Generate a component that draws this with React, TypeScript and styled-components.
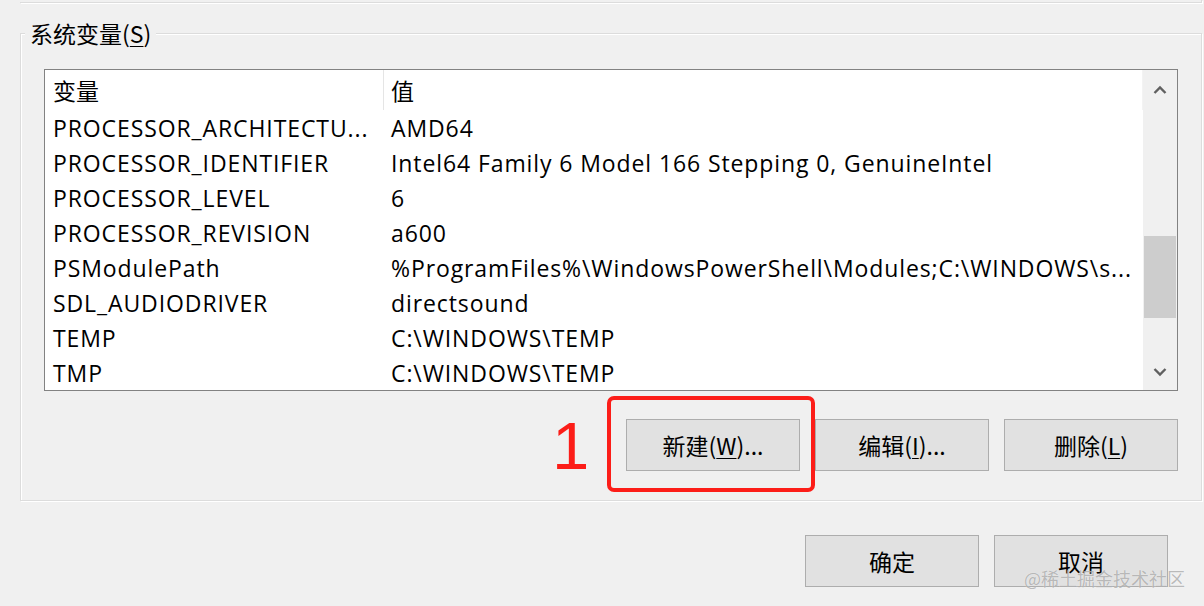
import React from "react";
import styled, { createGlobalStyle } from "styled-components";

const GlobalStyle = createGlobalStyle`
  html, body {
    margin: 0;
    padding: 0;
    background: #f0f0f0;
  }
  body {
    font-family: "Open Sans", "Noto Sans CJK SC", sans-serif;
    color: #000;
  }
`;

const rows = [
  { name: "PROCESSOR_ARCHITECTU...", value: "AMD64" },
  {
    name: "PROCESSOR_IDENTIFIER",
    value: "Intel64 Family 6 Model 166 Stepping 0, GenuineIntel",
  },
  { name: "PROCESSOR_LEVEL", value: "6" },
  { name: "PROCESSOR_REVISION", value: "a600" },
  {
    name: "PSModulePath",
    value: "%ProgramFiles%\\WindowsPowerShell\\Modules;C:\\WINDOWS\\s...",
  },
  { name: "SDL_AUDIODRIVER", value: "directsound" },
  { name: "TEMP", value: "C:\\WINDOWS\\TEMP" },
  { name: "TMP", value: "C:\\WINDOWS\\TEMP" },
];

const App = () => {
  return (
    <>
      <GlobalStyle />
      <Page>
        <UpperEdge />
        <GroupBox>
          <GroupLabel>
            系统变量(<u>S</u>)
          </GroupLabel>
          <ListBox>
            <ListContent>
              <HeaderRow>
                <HeaderCell $divider>变量</HeaderCell>
                <HeaderCell>值</HeaderCell>
              </HeaderRow>
              {rows.map((r) => (
                <Row key={r.name}>
                  <NameCell>{r.name}</NameCell>
                  <ValueCell>{r.value}</ValueCell>
                </Row>
              ))}
            </ListContent>
            <ScrollBar>
              <ArrowButton>
                <svg width="14" height="10" viewBox="0 0 14 10">
                  <polyline
                    points="1.5,8 7,2.5 12.5,8"
                    fill="none"
                    stroke="#606060"
                    strokeWidth="2.4"
                  />
                </svg>
              </ArrowButton>
              <Track>
                <Thumb />
              </Track>
              <ArrowButton>
                <svg width="14" height="10" viewBox="0 0 14 10">
                  <polyline
                    points="1.5,2 7,7.5 12.5,2"
                    fill="none"
                    stroke="#606060"
                    strokeWidth="2.4"
                  />
                </svg>
              </ArrowButton>
            </ScrollBar>
          </ListBox>
          <ButtonRow>
            <Highlighted>
              <StepNumber>1</StepNumber>
              <RedFrame />
              <DialogButton>
                新建(<u>W</u>)...
              </DialogButton>
            </Highlighted>
            <DialogButton>
              编辑(<u>I</u>)...
            </DialogButton>
            <DialogButton>
              删除(<u>L</u>)
            </DialogButton>
          </ButtonRow>
        </GroupBox>
        <FooterRow>
          <DialogButton>确定</DialogButton>
          <DialogButton>取消</DialogButton>
          <Watermark>@稀土掘金技术社区</Watermark>
        </FooterRow>
      </Page>
    </>
  );
};

const Page = styled.div`
  width: 1204px;
  height: 606px;
  overflow: hidden;
  background: #f0f0f0;
`;

const UpperEdge = styled.div`
  margin-left: 20px;
  width: 1181px;
  height: 2px;
  border-right: 1px solid #dcdcdc;
  border-bottom: 1px solid #dcdcdc;
  box-shadow: 1px 1px 0 #ffffff;
`;

const GroupBox = styled.div`
  position: relative;
  box-sizing: border-box;
  margin: 30px 0 0 20px;
  width: 1182px;
  height: 468px;
  border: 1px solid #dcdcdc;
  box-shadow: 1px 1px 0 #ffffff, inset 1px 1px 0 #ffffff;
  padding: 35px 0 0 23px;
`;

const GroupLabel = styled.div`
  position: absolute;
  left: 4px;
  top: -18px;
  padding: 0 5px;
  background: #f0f0f0;
  font-size: 23px;
  line-height: 34px;
  font-family: "Noto Sans CJK SC", sans-serif;

  u {
    text-decoration-thickness: 1px;
    text-underline-offset: 3px;
  }
`;

const ListBox = styled.div`
  box-sizing: border-box;
  display: flex;
  width: 1134px;
  height: 322px;
  border: 1px solid #828282;
  background: #ffffff;
`;

const ListContent = styled.div`
  flex: 1;
  min-width: 0;
  display: flex;
  flex-direction: column;
`;

const HeaderRow = styled.div`
  display: grid;
  grid-template-columns: 339px 1fr;
  height: 40px;
  border-right: 1px solid #f3f3f3;
`;

const HeaderCell = styled.div<{ $divider?: boolean }>`
  position: relative;
  display: flex;
  align-items: center;
  padding: 0 0 0 ${(p) => (p.$divider ? "8px" : "7px")};
  font-family: "Noto Sans CJK SC", sans-serif;
  font-size: 23px;
  border-right: ${(p) => (p.$divider ? "1px solid #e5e5e5" : "none")};
`;

const Row = styled.div`
  display: grid;
  grid-template-columns: 340px 1fr;
  height: 35px;
  align-items: center;
`;

const NameCell = styled.div`
  padding: 0 0 0 8px;
  font-size: 23px;
  white-space: nowrap;
  overflow: hidden;
  font-family: "Open Sans", sans-serif;
  letter-spacing: 0.9px;
`;

const ValueCell = styled(NameCell)`
  padding: 0 0 0 6px;
`;

const ScrollBar = styled.div`
  width: 34px;
  display: flex;
  flex-direction: column;
  background: #f0f0f0;
`;

const ArrowButton = styled.div`
  height: 40px;
  display: flex;
  align-items: center;
  justify-content: center;

  &:last-child {
    height: 36px;
  }
`;

const Track = styled.div`
  flex: 1;
  padding-top: 126px;
`;

const Thumb = styled.div`
  margin: 0 1px;
  height: 82px;
  background: #cdcdcd;
`;

const ButtonRow = styled.div`
  display: flex;
  justify-content: flex-end;
  gap: 15px;
  width: 1134px;
  margin-top: 28px;
`;

const Highlighted = styled.div`
  position: relative;
  display: flex;
`;

const RedFrame = styled.div`
  position: absolute;
  left: -19px;
  top: -23px;
  width: 208px;
  height: 96px;
  box-sizing: border-box;
  border: 4px solid #fc1d18;
  border-radius: 7px;
`;

const StepNumber = styled.div`
  position: absolute;
  left: -74px;
  top: -13px;
  font-family: "Liberation Sans", Arial, sans-serif;
  font-size: 67px;
  line-height: 80px;
  color: #fc1d18;
`;

const DialogButton = styled.button`
  box-sizing: border-box;
  width: 174px;
  height: 52px;
  padding: 0;
  border: 1px solid #adadad;
  background: #e1e1e1;
  color: #000;
  font-family: "Noto Sans CJK SC", sans-serif;
  font-size: 23px;
  line-height: 1;

  u {
    text-decoration-thickness: 1px;
    text-underline-offset: 3px;
  }
`;

const FooterRow = styled.div`
  position: relative;
  display: flex;
  justify-content: flex-end;
  gap: 15px;
  margin-top: 34px;
  padding-right: 36px;
`;

const Watermark = styled.div`
  position: absolute;
  right: 19px;
  top: 30px;
  font-family: "Noto Sans CJK SC", sans-serif;
  font-size: 18px;
  color: rgba(130, 130, 130, 0.55);
  text-shadow: 0 0 1px rgba(255, 255, 255, 0.8);
  white-space: nowrap;
`;

export default App;
